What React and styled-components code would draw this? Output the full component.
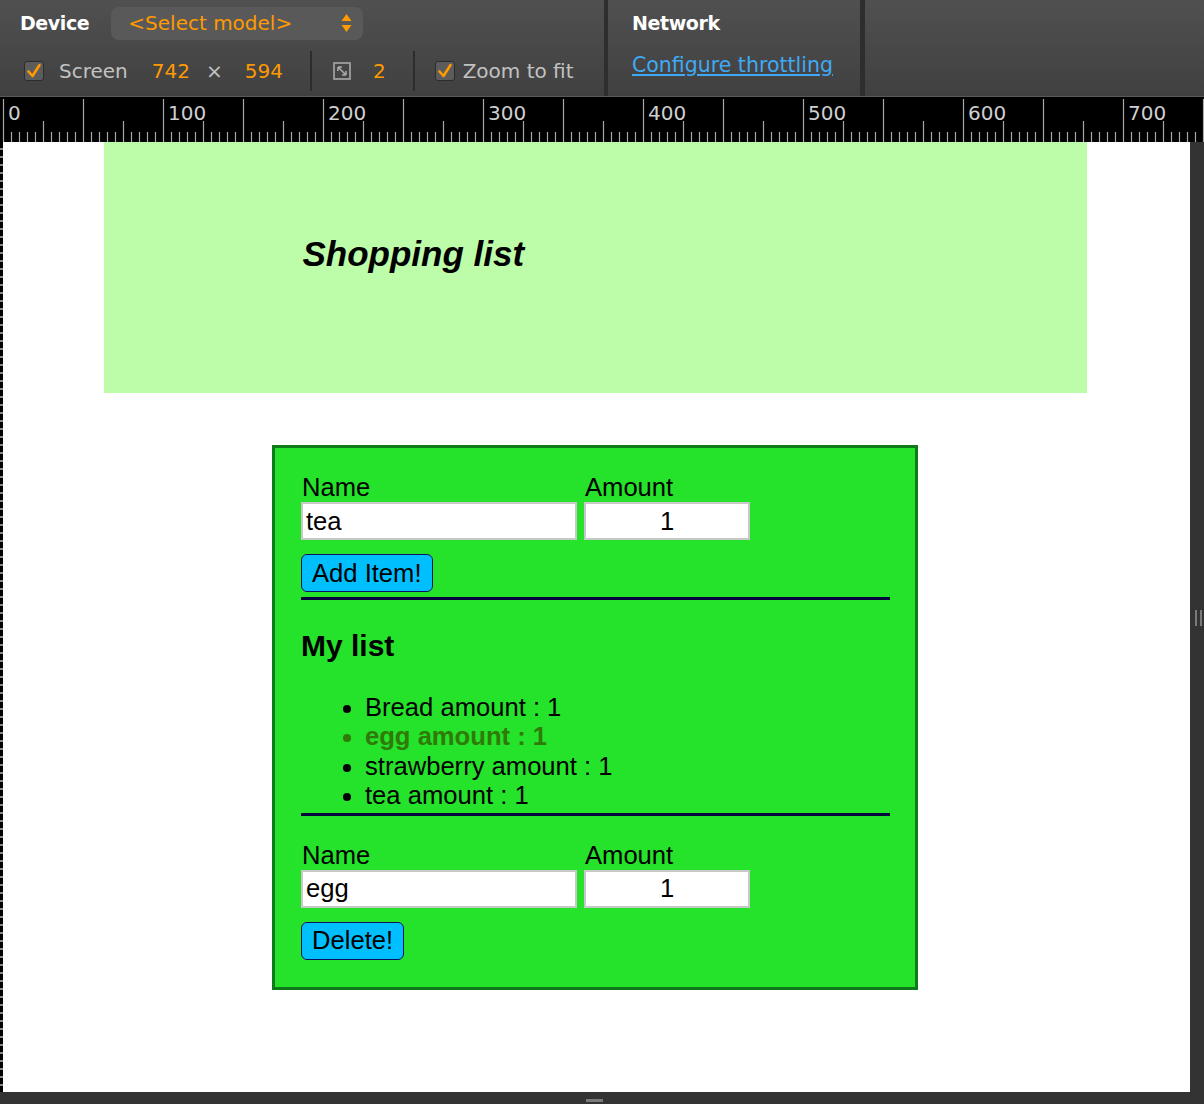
import styled, { createGlobalStyle } from "styled-components";

const GlobalStyle = createGlobalStyle`
  html, body {
    margin: 0;
    padding: 0;
    background: #333333;
  }
  body {
    width: 1204px;
    height: 1104px;
    overflow: hidden;
  }
`;

const items = [
  { name: "Bread", amount: 1 },
  { name: "egg", amount: 1, selected: true },
  { name: "strawberry", amount: 1 },
  { name: "tea", amount: 1 },
];

function CheckBox() {
  return (
    <Check>
      <svg width="16" height="16" viewBox="0 0 16 16">
        <path d="M2.5 8.5 L6.5 13 L13.5 2" fill="none" stroke="#ff9a00" strokeWidth="2.6" strokeLinecap="round" strokeLinejoin="round" />
      </svg>
    </Check>
  );
}

function Ruler() {
  const ticks = [];
  for (let i = 0; 3 + i * 8 < 1204; i++) {
    const x = 3 + i * 8 + 0.5;
    const top = i % 10 === 0 ? 2 : i % 5 === 0 ? 24 : 35;
    ticks.push(<line key={i} x1={x} x2={x} y1={top} y2={45} />);
  }
  const labels = [];
  for (let k = 0; k < 8; k++) {
    labels.push(
      <text key={k} x={3 + k * 160 + 5} y={23}>
        {k * 100}
      </text>
    );
  }
  return (
    <RulerBar>
      <svg width="1204" height="45">
        <g stroke="#a8a8a8" strokeWidth="1.2">{ticks}</g>
        <g fill="#cfcfcf" fontFamily="DejaVu Sans, sans-serif" fontSize="20">
          {labels}
        </g>
      </svg>
    </RulerBar>
  );
}

function ItemForm({ name, amount, action }) {
  return (
    <Form>
      <Fields>
        <Label>Name</Label>
        <Label>Amount</Label>
        <TextInput value={name} readOnly />
        <TextInput $center value={amount} readOnly />
      </Fields>
      <Button>{action}</Button>
    </Form>
  );
}

export default function App() {
  return (
    <Screen>
      <GlobalStyle />
      <Toolbar>
        <DevicePanel>
          <TopRow>
            <PanelTitle>Device</PanelTitle>
            <ModelSelect>
              <span>&lt;Select model&gt;</span>
              <svg width="11" height="20" viewBox="0 0 11 20">
                <path d="M5.5 1 L10.5 8 L0.5 8 Z M0.5 12 L10.5 12 L5.5 19 Z" fill="#ff9a00" />
              </svg>
            </ModelSelect>
          </TopRow>
          <OptionsRow>
            <CheckBox />
            <Muted $ml={15}>Screen</Muted>
            <Value $ml={24}>742</Value>
            <Muted $ml={16}>×</Muted>
            <Value $ml={22}>594</Value>
            <Divider $ml={27} />
            <ResizeIcon width="18" height="18" viewBox="0 0 18 18">
              <rect x="1" y="1" width="16" height="16" fill="none" stroke="#a9a9a9" strokeWidth="1.6" />
              <path d="M5 5 L13 13 M5 5 L5 9 M5 5 L9 5 M13 13 L13 9 M13 13 L9 13" stroke="#a9a9a9" strokeWidth="1.6" fill="none" />
            </ResizeIcon>
            <Value $ml={22}>2</Value>
            <Divider $ml={27} />
            <CheckSpacer>
              <CheckBox />
            </CheckSpacer>
            <Muted $ml={8}>Zoom to fit</Muted>
          </OptionsRow>
        </DevicePanel>
        <NetworkPanel>
          <PanelTitle>Network</PanelTitle>
          <Link href="#">Configure throttling</Link>
        </NetworkPanel>
        <EmptyPanel />
      </Toolbar>
      <Ruler />
      <Viewport>
        <LeftEdge />
        <Page>
          <Banner>
            <Title>Shopping list</Title>
          </Banner>
          <Card>
            <ItemForm name="tea" amount="1" action="Add Item!" />
            <Rule $mt={5} />
            <ListTitle>My list</ListTitle>
            <List>
              {items.map((item) => (
                <ListItem key={item.name} $selected={item.selected}>
                  {item.name} amount : {item.amount}
                </ListItem>
              ))}
            </List>
            <Rule $mt={2} />
            <Spaced>
              <ItemForm name="egg" amount="1" action="Delete!" />
            </Spaced>
          </Card>
        </Page>
        <SideStrip>
          <Grip />
        </SideStrip>
      </Viewport>
      <BottomStrip>
        <BottomGrip />
      </BottomStrip>
    </Screen>
  );
}

const Screen = styled.div`
  width: 1204px;
  height: 1104px;
  display: flex;
  flex-direction: column;
  background: #333333;
`;

const Toolbar = styled.div`
  height: 96px;
  display: flex;
  background: linear-gradient(#505050, #404040);
  border-bottom: 1px solid #595959;
  font-family: "DejaVu Sans", sans-serif;
  font-size: 20px;
`;

const DevicePanel = styled.div`
  width: 584px;
  padding-left: 20px;
  display: flex;
  flex-direction: column;
  border-right: 4px solid #2e2e2e;
`;

const TopRow = styled.div`
  height: 46px;
  display: flex;
  align-items: center;
`;

const PanelTitle = styled.div`
  color: #ffffff;
  font-weight: bold;
  font-size: 19px;
  letter-spacing: -0.4px;
`;

const ModelSelect = styled.div`
  margin-left: 22px;
  width: 252px;
  height: 33px;
  box-sizing: border-box;
  padding: 0 11px 0 17px;
  border-radius: 8px;
  background: #595959;
  display: flex;
  align-items: center;
  justify-content: space-between;
  color: #ff9a00;
`;

const OptionsRow = styled.div`
  height: 50px;
  display: flex;
  align-items: center;
  padding-left: 4px;
`;

const Check = styled.div`
  width: 20px;
  height: 20px;
  box-sizing: border-box;
  border: 1px solid #2c2c2c;
  border-radius: 3px;
  background: #5c5c5c;
  display: flex;
  align-items: center;
  justify-content: center;
`;

const CheckSpacer = styled.div`
  margin-left: 20px;
`;

const Muted = styled.span`
  margin-left: ${(p) => p.$ml}px;
  color: #c2c2c2;
`;

const Value = styled.span`
  margin-left: ${(p) => p.$ml}px;
  color: #ff9a00;
`;

const Divider = styled.div`
  margin-left: ${(p) => p.$ml}px;
  width: 2px;
  height: 40px;
  background: #2c2c2c;
`;

const ResizeIcon = styled.svg`
  margin-left: 21px;
`;

const NetworkPanel = styled.div`
  width: 228px;
  padding-left: 24px;
  display: flex;
  flex-direction: column;
  border-right: 5px solid #2e2e2e;
  padding-top: 12px;
  gap: 19px;
`;

const Link = styled.a`
  color: #3fa9f5;
  font-size: 20.5px;
  text-decoration: underline;
`;

const EmptyPanel = styled.div`
  flex: 1;
`;

const RulerBar = styled.div`
  height: 45px;
  background: #000000;
  svg {
    display: block;
  }
`;

const Viewport = styled.div`
  height: 950px;
  display: flex;
`;

const LeftEdge = styled.div`
  width: 3px;
  background: repeating-linear-gradient(#000 0 6px, #888 6px 8px);
`;

const Page = styled.div`
  width: 1184px;
  padding-right: 3px;
  background: #ffffff;
  font-family: "Liberation Sans", Arial, sans-serif;
  font-size: 25.6px;
  color: #000000;
`;

const Banner = styled.div`
  width: 983px;
  height: 251px;
  margin: 0 auto;
  box-sizing: border-box;
  padding: 92px 0 0 199px;
  background: #bdfca8;
`;

const Title = styled.h1`
  margin: 0;
  font-size: 35px;
  line-height: 40px;
  font-weight: bold;
  font-style: italic;
`;

const Card = styled.div`
  width: 646px;
  box-sizing: border-box;
  margin: 52px auto 0;
  padding: 23px 25px 27px 26px;
  background: #25e22b;
  border: 3px solid #0f7a1b;
`;

const Form = styled.div`
  display: flex;
  flex-direction: column;
  align-items: flex-start;
`;

const Fields = styled.div`
  display: grid;
  grid-template-columns: 276px 166px;
  column-gap: 7px;
`;

const Label = styled.div`
  padding: 2px 0 0 1px;
  line-height: 29px;
`;

const TextInput = styled.input`
  height: 38px;
  box-sizing: border-box;
  margin: 0;
  padding: 0 3px;
  border: 2px solid #c8c8c8;
  background: #ffffff;
  font-family: "Liberation Sans", Arial, sans-serif;
  font-size: 25.6px;
  color: #000000;
  text-align: ${(p) => (p.$center ? "center" : "left")};
  outline: none;
`;

const Button = styled.button`
  margin-top: 14px;
  height: 38px;
  padding: 0 10px;
  border: 1.5px solid #0d1260;
  border-radius: 6px;
  background: #00bfff;
  font-family: "Liberation Sans", Arial, sans-serif;
  font-size: 25.6px;
  color: #000000;
`;

const Rule = styled.div`
  margin-top: ${(p) => p.$mt}px;
  height: 3px;
  background: #03063c;
`;

const ListTitle = styled.h3`
  margin: 29px 0 0;
  font-size: 30px;
  line-height: 34px;
  font-weight: bold;
`;

const List = styled.ul`
  margin: 30px 0 0;
  padding-left: 64px;
`;

const ListItem = styled.li`
  line-height: 29.4px;
  font-weight: ${(p) => (p.$selected ? "bold" : "normal")};
  color: ${(p) => (p.$selected ? "#2f7a08" : "#000000")};
`;

const Spaced = styled.div`
  margin-top: 23px;
`;

const SideStrip = styled.div`
  flex: 1;
  position: relative;
  background: #333333;
`;

const Grip = styled.div`
  position: absolute;
  top: 468px;
  left: 5px;
  width: 3px;
  height: 16px;
  border-left: 2px solid #7a7a7a;
  border-right: 2px solid #7a7a7a;
`;

const BottomStrip = styled.div`
  flex: 1;
  position: relative;
  background: #333333;
`;

const BottomGrip = styled.div`
  position: absolute;
  top: 7px;
  left: 586px;
  width: 17px;
  height: 3px;
  background: #7a7a7a;
`;
